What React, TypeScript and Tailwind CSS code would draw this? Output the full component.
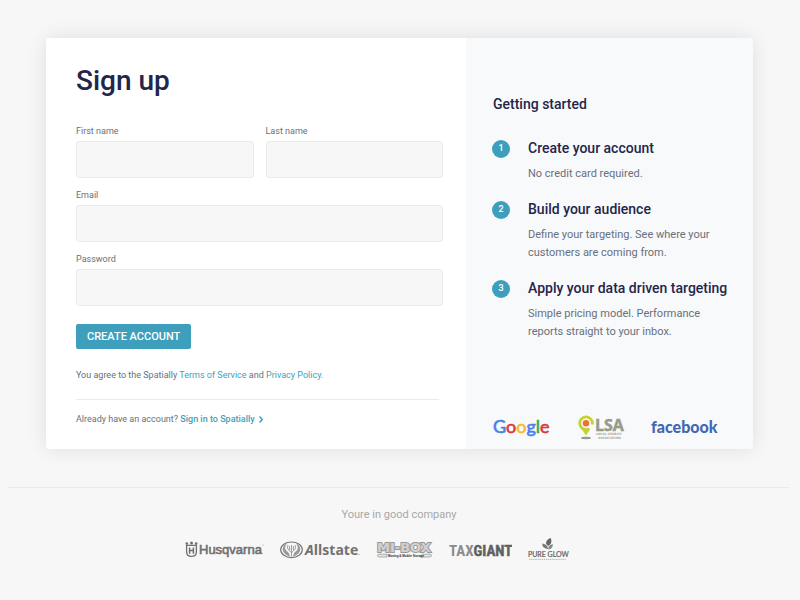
import type { ReactNode } from 'react'

interface FieldProps {
  id: string
  label: string
  type?: string
}

const steps = [
  { title: 'Create your account', body: 'No credit card required.' },
  { title: 'Build your audience', body: 'Define your targeting. See where your customers are coming from.' },
  { title: 'Apply your data driven targeting', body: 'Simple pricing model. Performance reports straight to your inbox.' },
]

function Field({ id, label, type = 'text' }: FieldProps) {
  return (
    <div className="flex flex-1 flex-col gap-1">
      <label htmlFor={id} className="text-[9px] leading-3 text-[#68707c]">{label}</label>
      <input
        id={id}
        type={type}
        className="h-[37px] w-full rounded-[3px] border border-[#ebebeb] bg-[#f7f7f7] px-3 text-xs text-[#24254a] outline-none focus:border-[#3e9fbc]"
      />
    </div>
  )
}

function TextLink({ children }: { children: ReactNode }) {
  return <a href="#" className="text-[#3e9fbc] hover:underline">{children}</a>
}

function GoogleLogo() {
  return (
    <svg width="60" height="24" viewBox="0 0 60 24" role="img" aria-label="Google">
      <text x="0" y="17" fontFamily="Lato, sans-serif" fontSize="18" fontWeight="400" strokeWidth="0.6">
        <tspan fill="#4a80ec" stroke="#4a80ec">G</tspan>
        <tspan fill="#e0353f" stroke="#e0353f">o</tspan>
        <tspan fill="#f5bb2c" stroke="#f5bb2c">o</tspan>
        <tspan fill="#4a80ec" stroke="#4a80ec">g</tspan>
        <tspan fill="#35a853" stroke="#35a853">l</tspan>
        <tspan fill="#e0353f" stroke="#e0353f">e</tspan>
      </text>
    </svg>
  )
}

function LsaLogo() {
  return (
    <svg width="48" height="26" viewBox="0 0 48 26" role="img" aria-label="LSA Local Search Association">
      <ellipse cx="8" cy="23" rx="5" ry="1.2" fill="#979b8c" />
      <path d="M11.4 13.6A6.3 6.3 0 1 1 14.3 9.4" fill="none" stroke="#c4d32c" strokeWidth="2.8" />
      <path d="M3.8 14.2L8 20.6L12.2 14.2L8 15.2Z" fill="#c4d32c" />
      <circle cx="8" cy="8.2" r="3.2" fill="#f07030" />
      <text x="17" y="16" fontFamily="'Open Sans', sans-serif" fontSize="16" fontWeight="700" fill="#979b8c" stroke="#979b8c" strokeWidth="0.5">LSA</text>
      <text x="18" y="20" fontFamily="'DejaVu Sans', sans-serif" fontSize="3" fontWeight="700" fill="#a5a89c">LOCAL SEARCH</text>
      <text x="20" y="24" fontFamily="'DejaVu Sans', sans-serif" fontSize="3" fontWeight="700" fill="#a5a89c">ASSOCIATION</text>
    </svg>
  )
}

function FacebookLogo() {
  return (
    <svg width="68" height="20" viewBox="0 0 68 20" role="img" aria-label="facebook">
      <text x="0" y="15" fontFamily="Lato, sans-serif" fontSize="16" fontWeight="900" fill="#4267b2">facebook</text>
    </svg>
  )
}

function HusqvarnaLogo() {
  return (
    <svg width="79" height="20" viewBox="0 0 79 20" role="img" aria-label="Husqvarna">
      <g fill="none" stroke="#707070">
        <path d="M1.6 5.4V11.8C1.6 15 3.4 16.4 6.5 16.4S11.4 15 11.4 11.8V5.4Z" strokeWidth="1.3" />
        <path d="M4.6 7.4V13.8M8.4 7.4V13.8M4.6 10.6H8.4" strokeWidth="1.5" />
      </g>
      <g fill="#707070">
        <circle cx="1.8" cy="3.6" r="1.3" />
        <circle cx="6.5" cy="3" r="1.5" />
        <circle cx="11.2" cy="3.6" r="1.3" />
      </g>
      <text x="14" y="14" fontFamily="'Liberation Sans', sans-serif" fontSize="13" fill="#707070" stroke="#707070" strokeWidth="0.6">Husqvarna</text>
      <circle cx="78" cy="5" r="0.6" fill="#999" />
    </svg>
  )
}

function AllstateLogo() {
  return (
    <svg width="80" height="20" viewBox="0 0 80 20" role="img" aria-label="Allstate">
      <ellipse cx="11.5" cy="9.8" rx="10.8" ry="7.8" fill="#f7f7f7" stroke="#777" strokeWidth="1.2" />
      <path d="M7 3.5C3 5 1.8 9 3.5 12C5 14.6 8 16 10 16.4C9.5 13 7.6 11.8 6.2 10.6C4.5 8.8 5.3 5.4 7 3.5Z" fill="#999" />
      <path d="M16 3.5C20 5 21.2 9 19.5 12C18 14.6 15 16 13 16.4C13.5 13 15.4 11.8 16.8 10.6C18.5 8.8 17.7 5.4 16 3.5Z" fill="#999" />
      <path d="M8 5C6.8 8 8 10 11.5 12.5C15 10 16.2 8 15 5M11.5 5V16.5M9.6 6V10M13.4 6V10" fill="none" stroke="#888" strokeWidth="0.8" />
      <text x="25" y="15" fontFamily="'Open Sans', sans-serif" fontSize="14" fontWeight="700" fill="#727272">
        <tspan fontStyle="italic">A</tspan>llstate
      </text>
      <circle cx="79" cy="14.3" r="0.6" fill="#999" />
    </svg>
  )
}

function MiBoxLogo() {
  return (
    <svg width="57" height="20" viewBox="0 0 57 20" role="img" aria-label="MI-BOX Moving & Mobile Storage">
      <text x="1" y="12" fontFamily="'DejaVu Sans', sans-serif" fontSize="13" fontWeight="700" fill="#d2d2d2" stroke="#989898" strokeWidth="2" paintOrder="stroke">MI-BOX</text>
      <path d="M1 15.6L3 14.2H11V17H3ZM56 15.6L54 14.2H46V17H54Z" fill="#e4e4e4" stroke="#909090" strokeWidth="0.7" />
      <text x="12" y="17" fontFamily="'Liberation Sans', sans-serif" fontSize="3" fontWeight="700" fill="#222">Moving &amp; Mobile Storage</text>
    </svg>
  )
}

function TaxGiantLogo() {
  return (
    <svg width="63" height="20" viewBox="0 0 63 20" role="img" aria-label="TAXGIANT">
      <text x="0" y="16" fontFamily="'Liberation Sans Narrow', 'Roboto Condensed', Roboto, sans-serif" fontSize="15" fontWeight="700">
        <tspan fill="#8c8c8c">TAX</tspan>
        <tspan fill="#606060" stroke="#606060" strokeWidth="0.4">GIANT</tspan>
      </text>
    </svg>
  )
}

function PureGlowLogo() {
  return (
    <svg width="42" height="24" viewBox="0 0 42 24" role="img" aria-label="PURE GLOW">
      <path d="M20 11C15.8 10.5 14 8.6 14.4 5.5C17.6 6 20 8 20 11Z" fill="#777" />
      <path d="M18.2 6C17.6 3.4 19.4 1 22.6 0C24.4 3.5 23 6.4 20.2 8Z" fill="#666" />
      <path d="M20.2 11.4C20.2 8.4 21.7 6.6 24.8 6C25 9.4 23.2 11.4 20.2 11.4Z" fill="#8a8a8a" />
      <text x="0" y="19" fontFamily="Lato, sans-serif" fontSize="7" fill="#606060" stroke="#606060" strokeWidth="0.2">PURE GLOW</text>
      <path d="M1 21.4H38" stroke="#b4b4b4" strokeWidth="0.9" strokeDasharray="1.5 0.6" />
    </svg>
  )
}

export default function App() {
  return (
    <div className="min-h-screen bg-[#f7f7f7] pt-[38px] font-[Roboto,sans-serif] text-[#68707c]">
      <main className="mr-[47px] ml-[46px] grid grid-cols-[420fr_287fr] overflow-hidden rounded-[3px] bg-white shadow-[0_0_20px_rgba(0,0,0,0.1)]">
        <section className="pt-6 pr-[23px] pb-6 pl-[30px]">
          <h1 className="text-[28px] leading-[38px] font-medium text-[#24254a]">Sign up</h1>
          <form className="mt-[25px]" onSubmit={e => e.preventDefault()}>
            <div className="flex flex-col gap-[11px]">
              <div className="flex gap-3">
                <Field id="first-name" label="First name" />
                <Field id="last-name" label="Last name" />
              </div>
              <Field id="email" label="Email" type="email" />
              <Field id="password" label="Password" type="password" />
            </div>
            <button
              type="submit"
              className="mt-[18px] h-[25px] rounded-[2px] bg-[#3e9fbc] px-[11px] pt-px text-[11px] font-medium text-white hover:bg-[#358eaa]">
              CREATE ACCOUNT
            </button>
          </form>
          <p className="mt-5 text-[9px] leading-3">
            You agree to the Spatially <TextLink>Terms of Service</TextLink> and <TextLink>Privacy Policy.</TextLink>
          </p>
          <hr className="mt-[18px] mr-1 border-[#ebebeb]" />
          <p className="mt-[13px] text-[9px] leading-3">
            Already have an account?{' '}
            <a href="#" className="font-medium text-[#3e9fbc] hover:underline">
              Sign in to Spatially
              <svg className="ml-1 inline-block align-[-1px]" width="4" height="7" viewBox="0 0 4 7" fill="none" stroke="currentColor" strokeWidth="1.5" aria-hidden="true">
                <path d="M0.6 0.6L3.2 3.5L0.6 6.4" />
              </svg>
            </a>
          </p>
        </section>

        <aside className="flex flex-col justify-between bg-[#f8f9fb] pt-14 pr-6 pb-2 pl-[26px]">
          <div>
            <h2 className="pl-px text-sm leading-5 font-medium text-[#24254a]">Getting started</h2>
            <ol className="mt-6 flex flex-col gap-4">
              {steps.map((step, i) => (
                <li key={step.title} className="flex gap-[18px]">
                  <span className="mt-0.5 flex size-[18px] shrink-0 items-center justify-center rounded-full bg-[#3e9fbc] text-[9px] font-medium text-white">
                    {i + 1}
                  </span>
                  <div>
                    <h3 className="text-sm leading-5 font-medium whitespace-nowrap text-[#24254a]">{step.title}</h3>
                    <p className="mt-[7px] max-w-[190px] text-[11px] leading-[18px]">{step.body}</p>
                  </div>
                </li>
              ))}
            </ol>
          </div>
          <div className="flex items-center gap-[25px] pl-px">
            <GoogleLogo />
            <LsaLogo />
            <FacebookLogo />
          </div>
        </aside>
      </main>

      <footer className="mr-2.5 ml-2 mt-[38px] border-t border-[#ebebeb] pt-[18px]">
        <p className="text-center text-[11px] leading-[18px] text-[#a8a8a8]">Youre in good company</p>
        <div className="mt-3.5 flex items-center justify-center gap-4 pr-11">
          <HusqvarnaLogo />
          <AllstateLogo />
          <MiBoxLogo />
          <TaxGiantLogo />
          <PureGlowLogo />
        </div>
      </footer>
    </div>
  )
}
